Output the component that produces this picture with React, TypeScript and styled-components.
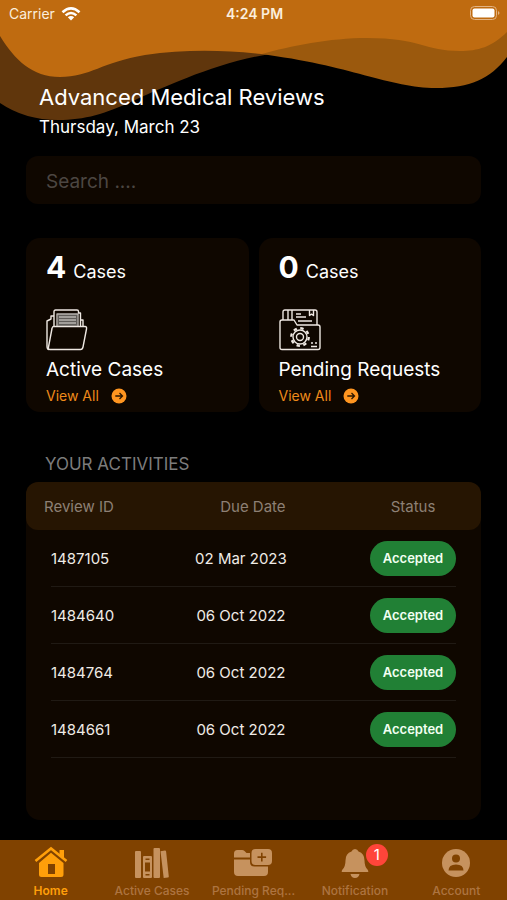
import React from "react";
import styled, { createGlobalStyle } from "styled-components";

const GlobalStyle = createGlobalStyle`
  * { box-sizing: border-box; }
  body { margin: 0; background: #000; color: #fff; font-family: Inter, Roboto, "Liberation Sans", sans-serif; }
  button, input { font-family: inherit; }
  h1, h2, p { margin: 0; font-weight: 400; }
`;

const Page = styled.div`
  position: relative;
  min-height: 100vh;
  display: flex;
  flex-direction: column;
`;

const Waves = styled.svg`
  position: absolute;
  top: 0;
  left: 0;
  width: 100%;
  height: 122px;
`;

const StatusBar = styled.div`
  position: relative;
  display: grid;
  grid-template-columns: 1fr auto 1fr;
  align-items: center;
  height: 27px;
  padding: 0 7px 0 9px;
  font-size: 14px;
  color: #fbeedd;
`;

const Carrier = styled.span`
  display: flex;
  align-items: center;
  gap: 6px;
`;

const Clock = styled.span`
  font-weight: 600;
`;

const Battery = styled.svg`
  justify-self: end;
`;

const Main = styled.main`
  position: relative;
  flex: 1;
  display: flex;
  flex-direction: column;
  padding: 55px 26px 20px;
`;

const Heading = styled.header`
  padding-left: 13px;
`;

const Title = styled.h1`
  font-size: 22px;
  line-height: 30px;
`;

const Today = styled.p`
  font-size: 17px;
  line-height: 30px;
`;

const Search = styled.input`
  width: 100%;
  height: 48px;
  margin-top: 14px;
  padding: 2px 20px 0;
  border: 0;
  border-radius: 12px;
  background: #0f0700;
  color: #fff;
  font-size: 19px;
  &::placeholder { color: #4c4642; opacity: 1; }
`;

const Cards = styled.section`
  display: grid;
  grid-template-columns: 1fr 1fr;
  gap: 10px;
  margin-top: 34px;
`;

const Card = styled.article`
  height: 174px;
  padding: 10px 20px;
  border-radius: 14px;
  background: #0f0700;
`;

const Count = styled.p`
  font-size: 18px;
  line-height: 38px;
`;

const Amount = styled.strong`
  margin-right: 7px;
  font-size: 30px;
  font-weight: 700;
`;

const CardIcon = styled.svg`
  display: block;
  margin-top: 18px;
`;

const CardTitle = styled.h2`
  margin-top: 4px;
  font-size: 19px;
  line-height: 30px;
`;

const ViewAll = styled.a`
  display: flex;
  align-items: center;
  gap: 12px;
  font-size: 14px;
  line-height: 22px;
  color: #ee8a1a;
  text-decoration: none;
`;

const SectionTitle = styled.h2`
  margin: 40px 0 6px;
  padding-left: 19px;
  font-size: 17px;
  line-height: 24px;
  color: #7c7c7c;
`;

const Panel = styled.section`
  flex: 1;
  padding-bottom: 20px;
  border-radius: 14px;
  background: #0f0700;
`;

const Table = styled.table`
  width: 100%;
  border-collapse: separate;
  border-spacing: 0;
  table-layout: fixed;
`;

const Gutter = styled.col`
  width: 25px;
`;

const IdCol = styled.col`
  width: 27%;
`;

const StatusCol = styled.col`
  width: 86px;
`;

const HeadCell = styled.th<{ $place: "start" | "middle" | "end" }>`
  height: 48px;
  padding: ${(p) => ({ start: "0 0 0 18px", middle: "0 38px 0 0", end: "0 25px 0 0" })[p.$place]};
  border-radius: ${(p) => ({ start: "12px 0 0 12px", middle: "0", end: "0 12px 12px 0" })[p.$place]};
  background: #261502;
  color: #8d8075;
  font-size: 15px;
  font-weight: 400;
  text-align: ${(p) => (p.$place === "start" ? "left" : "center")};
`;

const Cell = styled.td<{ $date?: boolean; $line?: boolean }>`
  height: 57px;
  padding: ${(p) => (p.$date ? "0 62px 0 0" : "0")};
  border-bottom: ${(p) => (p.$line ? "1px solid #201a14" : "0")};
  color: #efebe6;
  font-size: 15px;
  text-align: ${(p) => (p.$date ? "center" : "left")};
  white-space: nowrap;
`;

const Badge = styled.span`
  display: block;
  border-radius: 18px;
  background: #218035;
  color: #f2fff2;
  font-size: 13px;
  font-weight: 600;
  line-height: 35px;
  text-align: center;
`;

const TabBar = styled.nav`
  position: relative;
  display: grid;
  grid-template-columns: repeat(5, minmax(0, 1fr));
  height: 60px;
  background: #804200;
`;

const Tab = styled.button<{ $active?: boolean }>`
  display: flex;
  flex-direction: column;
  align-items: center;
  gap: 2px;
  padding: 5px 0 0;
  border: 0;
  background: none;
  color: ${(p) => (p.$active ? "#ff9f0a" : "#c6925e")};
  cursor: pointer;
`;

const TabIcon = styled.span`
  position: relative;
  display: block;
  height: 36px;
`;

const TabLabel = styled.span<{ $active?: boolean }>`
  color: ${(p) => (p.$active ? "#ff9f0a" : "#ad7440")};
  font-size: 12px;
  font-weight: ${(p) => (p.$active ? 600 : 500)};
  line-height: 16px;
  white-space: nowrap;
`;

const Counter = styled.span`
  position: absolute;
  top: -1px;
  left: 28px;
  width: 22px;
  height: 22px;
  border-radius: 11px;
  background: #ff453a;
  color: #fff;
  font-size: 15px;
  line-height: 22px;
  text-align: center;
`;

const WifiIcon = () => (
  <svg width="20" height="16" viewBox="0 0 20 16" fill="none" stroke="#fff" strokeWidth="2.6" aria-hidden="true">
    <path d="M1.5 6.2Q10-1.6 18.5 6.2M4.6 9.4q5.4-4.8 10.8 0" />
    <path d="M10 14.5l-3.2-3.2q3.2-2.6 6.4 0z" fill="#fff" stroke="none" />
  </svg>
);

const ArrowDot = () => (
  <svg width="16" height="16" viewBox="0 0 16 16" aria-hidden="true">
    <circle cx="8" cy="8" r="7.5" fill="#ff9520" />
    <path d="M4.3 8h7M8.5 5l3 3-3 3" fill="none" stroke="#2b1600" strokeWidth="1.3" />
  </svg>
);

const OpenFolder = () => (
  <CardIcon width="42" height="42" viewBox="0 0 42 42" fill="none" stroke="#eee8e2" strokeWidth="1.4" strokeLinejoin="round" aria-hidden="true">
    <path d="M11.500 5h20v12h-20z" fill="#5f5c59" stroke="none" />
    <path d="M8 17V2.500Q8 1 9.500 1H31q1.500 0 1.500 1.500V4" />
    <path d="M11 17V5h21v12M13 8h17M13 11h17M13 14h17" stroke="#b8b4b0" />
    <path d="M32 4h2.500v13M8 7H5v3L1 12v25q0 3.500 2 3.500M34.500 11H37v6" />
    <path d="M7.500 17.500H39q2 0 1.500 2.500L37 38q-.5 2.500-2.500 2.500H4q-2 0-1.500-2.500L6 19.500q.3-2 1.500-2z" />
  </CardIcon>
);

const GearFolder = () => (
  <CardIcon width="42" height="42" viewBox="0 0 42 42" fill="none" stroke="#eee8e2" strokeWidth="1.4" strokeLinejoin="round" aria-hidden="true">
    <path d="M1 13q0-2 2-2h12l3 5h21q2 0 2 2v20.500q0 2-2 2H3q-2 0-2-2z" />
    <path d="M4 11V3q0-2 2-2h30q2 0 2 2v13M9 1v10M13 1v10M30.500 1v5.500l2-1.300 2 1.300V1M17 5h5M17 8h10M19 12h14M32 34h2m2 0h2M32 37.500h6" />
    <circle cx="21" cy="28" r="3.500" />
    <circle cx="21" cy="28" r="7" />
    <circle cx="21" cy="28" r="8.800" strokeWidth="2.200" strokeDasharray="3.400 3.510" />
  </CardIcon>
);

const HomeIcon = () => (
  <svg width="34" height="34" viewBox="0 0 34 34" fill="currentColor" aria-hidden="true">
    <path d="M25.500 5H30v9l-4.500-4z" />
    <path d="M1.500 16L17 3.500 32.500 16" fill="none" stroke="currentColor" strokeWidth="2.600" />
    <path fillRule="evenodd" d="M17 7.800L29.500 18V29.500q0 2.500-2.500 2.500H7.500Q5 32 5 29.500V18zM14 19v10h7V19z" />
  </svg>
);

const BooksIcon = () => (
  <svg width="34" height="34" viewBox="0 0 34 34" fill="currentColor" aria-hidden="true">
    <rect y="6" width="6" height="27" rx="1" />
    <path fillRule="evenodd" d="M9 11h7q1 0 1 1v20q0 1-1 1H9q-1 0-1-1V12q0-1 1-1zm1.500 2.500v1.500h4v-1.500zM10 17.500v9h5v-9zm.5 11.500v1.500h4V29z" />
    <path d="M19.500 3H24q1 0 1 1v28q0 1-1 1h-4.500q-1 0-1-1V4q0-1 1-1zM25.500 6.200l4.500-.7q1 0 1.100 1l2.700 25q.1 1-.9 1.100l-4.200.5z" />
  </svg>
);

const FoldersIcon = () => (
  <svg width="40" height="34" viewBox="0 0 40 34" fill="currentColor" aria-hidden="true">
    <path d="M1 12.500V8.500Q1 5 4.500 5H9q1.500 0 2.500 1l2 2H17v4.500z" />
    <path d="M1 14.500h16V17q0 4.500 4.500 4.500H35V27q0 4-4 4H5q-4 0-4-4z" />
    <path fillRule="evenodd" d="M22.500 4H35q4 0 4 4v8q0 4-4 4H22.500q-4 0-4-4V8q0-4 4-4zm5.500 3.800v3.500h-3.500v1.600H28v3.500h1.600v-3.500h3.500v-1.600h-3.500V7.800z" />
  </svg>
);

const BellIcon = () => (
  <svg width="34" height="34" viewBox="0 0 34 34" fill="currentColor" aria-hidden="true">
    <path d="M17 4q2.500 0 3.500 2.500 6 2 6 9 0 6 3 9 .8.8.8 2.500H3.700q0-1.700.8-2.500 3-3 3-9 0-7 6-9Q14.500 4 17 4zM12.500 29h9q-.8 4-4.500 4t-4.500-4z" />
  </svg>
);

const AccountIcon = () => (
  <svg width="34" height="34" viewBox="0 0 34 34" aria-hidden="true">
    <circle cx="17" cy="18" r="14" fill="currentColor" />
    <circle cx="17" cy="13.500" r="4" fill="#804200" />
    <path d="M9.500 25.500q0-6 7.500-6t7.500 6z" fill="#804200" />
  </svg>
);

const rows = [
  ["1487105", "02 Mar 2023"],
  ["1484640", "06 Oct 2022"],
  ["1484764", "06 Oct 2022"],
  ["1484661", "06 Oct 2022"],
];

const summaries = [
  { amount: 4, title: "Active Cases", Icon: OpenFolder },
  { amount: 0, title: "Pending Requests", Icon: GearFolder },
];

const tabs = [
  { label: "Home", Icon: HomeIcon, active: true },
  { label: "Active Cases", Icon: BooksIcon },
  { label: "Pending Req...", Icon: FoldersIcon },
  { label: "Notification", Icon: BellIcon, count: 1 },
  { label: "Account", Icon: AccountIcon },
];

export default function App() {
  return (
    <Page>
      <GlobalStyle />
      <Waves viewBox="0 0 507 122" preserveAspectRatio="none" aria-hidden="true">
        <path d="M0 0H270V54C215 63 165 87 135 100C105 114 85 120 58 120Q25 120 0 103z" fill="#60360c" />
        <path d="M250 0H507V57C490 79 470 88 436 88C390 88 350 65 260 54z" fill="#9b590d" />
        <path d="M0 0H507V32C492 47 478 51 460 51C425 51 420 38 367 38C330 38 290 46 262 54C225 50 185 49 145 55C102 62 90 77 60 77C32 77 15 60 0 36z" fill="#bf6b10" />
      </Waves>
      <StatusBar>
        <Carrier>Carrier <WifiIcon /></Carrier>
        <Clock>4:24 PM</Clock>
        <Battery width="30" height="15" viewBox="0 0 30 15" aria-hidden="true">
          <rect x=".5" y=".5" width="26" height="13" rx="4" fill="none" stroke="#e2b383" />
          <rect x="2.500" y="2.500" width="22" height="9" rx="2" fill="#fff" />
          <path d="M28 5q3 2 0 4z" fill="#e2b383" />
        </Battery>
      </StatusBar>
      <Main>
        <Heading>
          <Title>Advanced Medical Reviews</Title>
          <Today>Thursday, March 23</Today>
        </Heading>
        <Search type="search" placeholder="Search ...." aria-label="Search" />
        <Cards>
          {summaries.map(({ amount, title, Icon }) => (
            <Card key={title}>
              <Count><Amount>{amount}</Amount>Cases</Count>
              <Icon />
              <CardTitle>{title}</CardTitle>
              <ViewAll href="#">View All <ArrowDot /></ViewAll>
            </Card>
          ))}
        </Cards>
        <SectionTitle>YOUR ACTIVITIES</SectionTitle>
        <Panel>
          <Table>
            <colgroup>
              <Gutter /><IdCol /><col /><StatusCol /><Gutter />
            </colgroup>
            <thead>
              <tr>
                <HeadCell colSpan={2} $place="start">Review ID</HeadCell>
                <HeadCell $place="middle">Due Date</HeadCell>
                <HeadCell colSpan={2} $place="end">Status</HeadCell>
              </tr>
            </thead>
            <tbody>
              {rows.map(([id, date]) => (
                <tr key={id}>
                  <Cell />
                  <Cell $line>{id}</Cell>
                  <Cell $line $date>{date}</Cell>
                  <Cell $line><Badge>Accepted</Badge></Cell>
                  <Cell />
                </tr>
              ))}
            </tbody>
          </Table>
        </Panel>
      </Main>
      <TabBar>
        {tabs.map(({ label, Icon, active, count }) => (
          <Tab key={label} type="button" $active={active}>
            <TabIcon>
              <Icon />
              {count && <Counter>{count}</Counter>}
            </TabIcon>
            <TabLabel $active={active}>{label}</TabLabel>
          </Tab>
        ))}
      </TabBar>
    </Page>
  );
}
